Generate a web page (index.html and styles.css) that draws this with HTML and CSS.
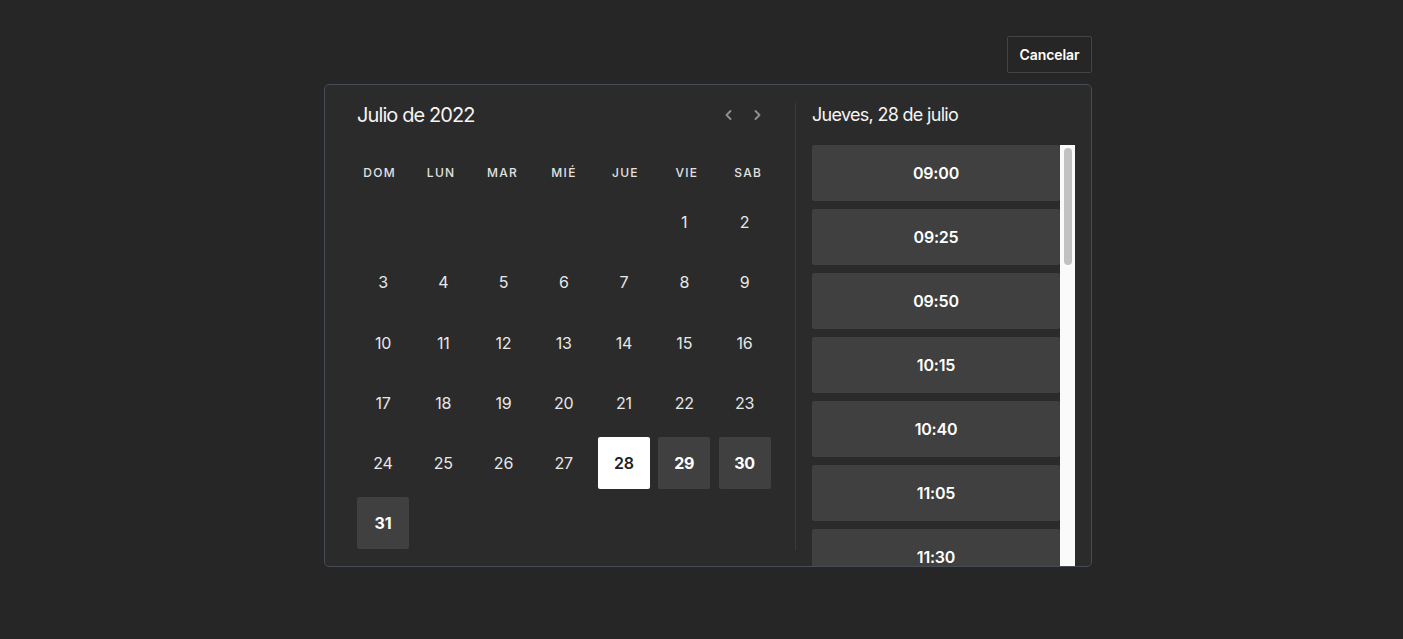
FILE: index.html
```html
<!DOCTYPE html>
<html lang="es">
<head>
<meta charset="utf-8">
<title>Calendario</title>
<link rel="stylesheet" href="styles.css">
</head>
<body>
<div class="wrap">
  <div class="toolbar">
    <button class="cancel">Cancelar</button>
  </div>
  <div class="panel">
    <div class="cal">
      <div class="cal-head">
        <div class="month">Julio de 2022</div>
        <div class="nav">
          <button class="nav-btn" aria-label="Anterior"><svg width="10" height="12" viewBox="0 0 10 12"><path d="M6.5 2 L2.5 6 L6.5 10" fill="none" stroke="#8f8f8f" stroke-width="1.9" stroke-linecap="round" stroke-linejoin="round"/></svg></button>
          <button class="nav-btn" aria-label="Siguiente"><svg width="10" height="12" viewBox="0 0 10 12"><path d="M3.5 2 L7.5 6 L3.5 10" fill="none" stroke="#8f8f8f" stroke-width="1.9" stroke-linecap="round" stroke-linejoin="round"/></svg></button>
        </div>
      </div>
      <div class="weekdays">
        <span>DOM</span><span>LUN</span><span>MAR</span><span>MIÉ</span><span>JUE</span><span>VIE</span><span>SAB</span>
      </div>
      <div class="days">
        <span class="day empty"></span><span class="day empty"></span><span class="day empty"></span><span class="day empty"></span><span class="day empty"></span>
        <span class="day">1</span><span class="day">2</span>
        <span class="day">3</span><span class="day">4</span><span class="day">5</span><span class="day">6</span><span class="day">7</span><span class="day">8</span><span class="day">9</span>
        <span class="day">10</span><span class="day">11</span><span class="day">12</span><span class="day">13</span><span class="day">14</span><span class="day">15</span><span class="day">16</span>
        <span class="day">17</span><span class="day">18</span><span class="day">19</span><span class="day">20</span><span class="day">21</span><span class="day">22</span><span class="day">23</span>
        <span class="day">24</span><span class="day">25</span><span class="day">26</span><span class="day">27</span><span class="day selected">28</span><span class="day avail">29</span><span class="day avail">30</span>
        <span class="day avail">31</span>
      </div>
    </div>
    <div class="divider"></div>
    <div class="times">
      <div class="date-title">Jueves, 28 de julio</div>
      <div class="slot-area">
        <div class="slots">
          <button class="slot">09:00</button>
          <button class="slot">09:25</button>
          <button class="slot">09:50</button>
          <button class="slot">10:15</button>
          <button class="slot">10:40</button>
          <button class="slot">11:05</button>
          <button class="slot">11:30</button>
        </div>
        <div class="scrollbar"><div class="thumb"></div></div>
      </div>
    </div>
  </div>
</div>
</body>
</html>
```

FILE: styles.css
```css
* { box-sizing: border-box; }
html, body { margin: 0; padding: 0; }
body {
  background: #262626;
  font-family: Inter, "Noto Sans", sans-serif;
  color: #e6e6e6;
  height: 639px;
  overflow: hidden;
}
.wrap {
  width: 768px;
  margin: 36px 0 0 324px;
}
.toolbar {
  display: flex;
  justify-content: flex-end;
  margin-bottom: 11px;
}
.cancel {
  height: 37px;
  width: 85px;
  background: #262626;
  border: 1px solid #444;
  border-radius: 2px;
  color: #fff;
  font-family: Inter, sans-serif;
  font-size: 14px;
  font-weight: 600;
  letter-spacing: -0.1px;
  padding: 0;
}
.panel {
  display: flex;
  height: 483px;
  background: #2b2b2b;
  border: 1px solid #464c57;
  border-radius: 5px;
  padding: 16px 16px 0 32px;
  overflow: hidden;
}
.cal {
  width: 414px;
  flex: none;
}
.cal-head {
  display: flex;
  align-items: center;
  justify-content: space-between;
  height: 28px;
}
.month {
  font-size: 20px;
  line-height: 28px;
  color: #f4f4f4;
  letter-spacing: -0.9px;
}
.nav { display: flex; }
.nav-btn {
  width: 28px;
  height: 28px;
  background: none;
  border: none;
  padding: 0;
  display: flex;
  align-items: center;
  justify-content: center;
}
.weekdays {
  display: grid;
  grid-template-columns: repeat(7, 1fr);
  margin: 23px -8px 0 -8px;
  height: 40px;
  align-items: center;
  text-align: center;
  font-size: 12px;
  font-weight: 500;
  letter-spacing: 1.3px;
  color: #e2e2e2;
}
.days {
  display: grid;
  grid-template-columns: repeat(7, 52px);
  grid-auto-rows: 52px;
  gap: 8.25px;
  margin-top: 4px;
}
.day {
  display: flex;
  align-items: center;
  justify-content: center;
  font-size: 16px;
  color: #e8e8e8;
  border-radius: 2px;
  letter-spacing: -0.2px;
}
.day.avail {
  background: #404040;
  color: #fff;
  font-weight: 700;
}
.day.selected {
  background: #fff;
  color: #222;
  font-weight: 600;
}
.divider {
  width: 1px;
  flex: none;
  margin: 2px 0 16px 24px;
  background: #3a3a3a;
}
.times {
  margin-left: 16px;
  flex: 1;
  display: flex;
  flex-direction: column;
  min-height: 0;
}
.date-title {
  font-size: 18px;
  line-height: 28px;
  color: #f4f4f4;
  letter-spacing: -0.7px;
  flex: none;
}
.slot-area {
  margin-top: 16px;
  flex: 1;
  min-height: 0;
  display: flex;
}
.slots {
  flex: 1;
  min-height: 0;
  overflow: hidden;
  display: flex;
  flex-direction: column;
  gap: 8px;
}
.slot {
  flex: none;
  height: 56px;
  width: 100%;
  background: #404040;
  border: none;
  border-radius: 2px;
  color: #fff;
  font-family: Inter, sans-serif;
  font-size: 16px;
  font-weight: 600;
  letter-spacing: -0.2px;
  padding: 0;
}
.scrollbar {
  width: 15px;
  flex: none;
  background: #fafafa;
  padding: 3px 3px 0 4px;
}
.thumb {
  height: 117px;
  border-radius: 4px;
  background: #c1c1c1;
}
```
